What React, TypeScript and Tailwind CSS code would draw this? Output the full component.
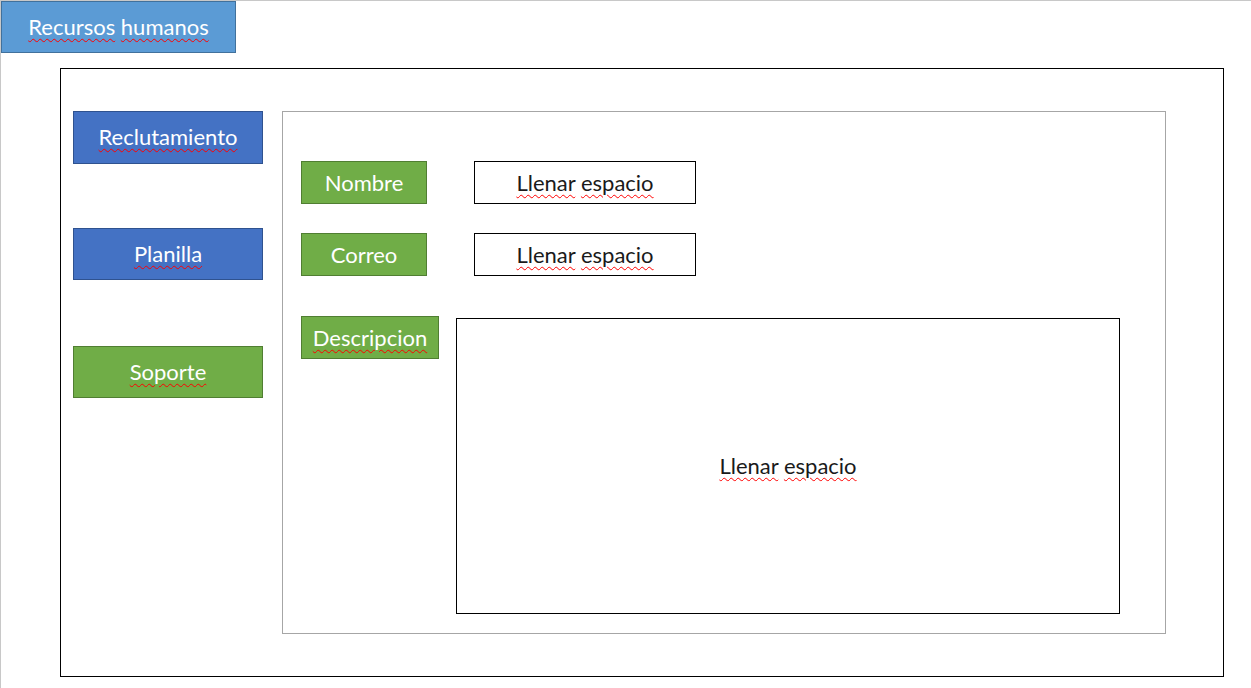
import React from 'react';

const font = { fontFamily: 'Lato, "Open Sans", sans-serif' };

// Word flagged by the spell checker: red wavy underline
function Sq({ children }: { children: React.ReactNode }) {
  return (
    <span className="underline decoration-wavy decoration-[#ff0000] decoration-1 underline-offset-[3px]">
      {children}
    </span>
  );
}

const sideButtons = [
  { id: 'rec', label: <Sq>Reclutamiento</Sq>, cls: 'h-[53px] bg-[#4472c4] border-[#2f528f]', gap: '' },
  { id: 'pla', label: <Sq>Planilla</Sq>, cls: 'h-[52px] bg-[#4472c4] border-[#2f528f]', gap: 'mt-[64px]' },
  { id: 'sop', label: <Sq>Soporte</Sq>, cls: 'h-[52px] bg-[#70ad47] border-[#507e32]', gap: 'mt-[66px]' },
];

function Label({ children, w }: { children: React.ReactNode; w: string }) {
  return (
    <div
      className={`${w} h-[43px] shrink-0 flex items-center justify-center bg-[#70ad47] border border-[#507e32] text-white text-[22px]`}
    >
      {children}
    </div>
  );
}

function Field() {
  return (
    <div className="ml-[47px] w-[222px] h-[43px] flex items-center justify-center border border-black text-[#1a1a1a] text-[22px]">
      <span>
        <Sq>Llenar</Sq> <Sq>espacio</Sq>
      </span>
    </div>
  );
}

export default function App() {
  return (
    <div className="w-[1251px] h-[688px] bg-white border-t border-l border-[#c8c8c8] overflow-hidden" style={font}>
      <div className="w-[235px] h-[52px] flex items-center justify-center bg-[#5b9bd5] border border-[#41719c] text-white text-[22px]">
        <span className="-mt-[2px]">
          <Sq>Recursos</Sq> <Sq>humanos</Sq>
        </span>
      </div>

      <div className="ml-[59px] mt-[15px] w-[1164px] h-[609px] border border-black flex pl-[12px] pt-[42px]">
        <div className="w-[190px] flex flex-col">
          {sideButtons.map((b) => (
            <div
              key={b.id}
              className={`${b.gap} flex items-center justify-center border text-white text-[22px] ${b.cls}`}
            >
              <span className="-mt-[2px]">{b.label}</span>
            </div>
          ))}
        </div>

        <div className="ml-[19px] w-[884px] h-[523px] border border-[#a6a6a6] pl-[18px] pt-[49px]">
          <div className="flex items-center">
            <Label w="w-[126px]">Nombre</Label>
            <Field />
          </div>
          <div className="flex items-center mt-[29px]">
            <Label w="w-[126px]">Correo</Label>
            <Field />
          </div>
          <div className="flex items-start mt-[40px]">
            <Label w="w-[138px]">
              <Sq>Descripcion</Sq>
            </Label>
            <div className="ml-[17px] mt-[2px] w-[664px] h-[296px] flex items-center justify-center border border-black text-[#1a1a1a] text-[22px]">
              <span className="-mt-[2px]">
                <Sq>Llenar</Sq> <Sq>espacio</Sq>
              </span>
            </div>
          </div>
        </div>
      </div>
    </div>
  );
}
